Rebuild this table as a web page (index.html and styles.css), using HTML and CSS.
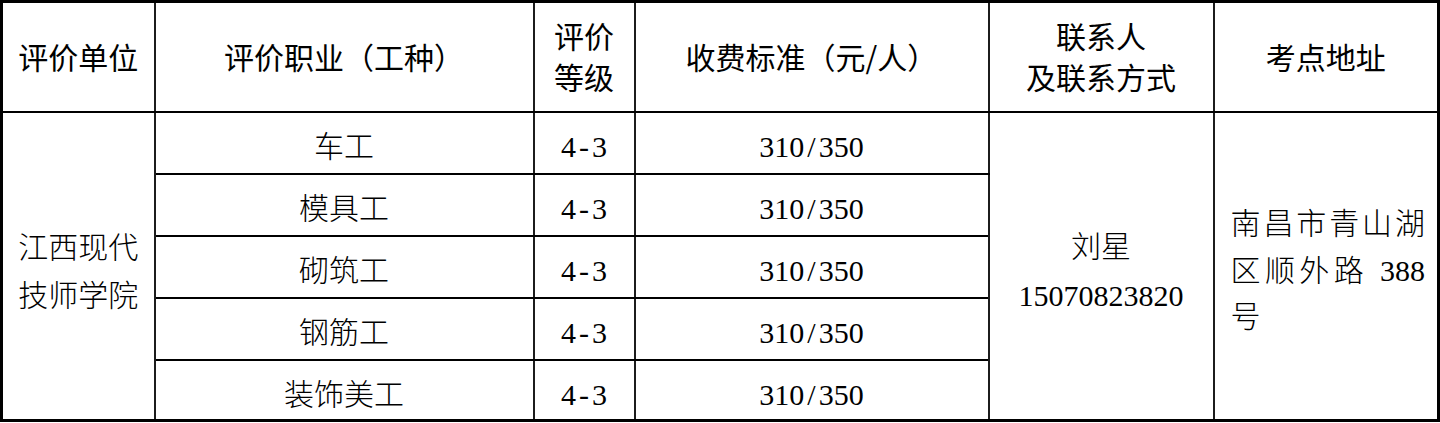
FILE: index.html
```html
<!DOCTYPE html>
<html lang="zh-CN">
<head>
<meta charset="utf-8">
<title>评价信息</title>
<link rel="stylesheet" href="styles.css">
</head>
<body>
<table class="grid">
  <colgroup>
    <col class="c1"><col class="c2"><col class="c3"><col class="c4"><col class="c5"><col class="c6">
  </colgroup>
  <thead>
    <tr class="head">
      <th>评价单位</th>
      <th>评价职业（工种）</th>
      <th class="two">评价<br>等级</th>
      <th>收费标准（元/人）</th>
      <th class="two">联系人<br>及联系方式</th>
      <th>考点地址</th>
    </tr>
  </thead>
  <tbody>
    <tr>
      <td rowspan="5" class="unit">江西现代<br>技师学院</td>
      <td class="cell">车工</td>
      <td class="cell">4<span class="sep">-</span>3</td>
      <td class="cell">310<span class="sep">/</span>350</td>
      <td rowspan="5" class="contact">刘星<br>15070823820</td>
      <td rowspan="5" class="addr">
        <div class="line just">南昌市青山湖</div>
        <div class="line just">区顺外路 388</div>
        <div class="line">号</div>
      </td>
    </tr>
    <tr><td class="cell">模具工</td><td class="cell">4<span class="sep">-</span>3</td><td class="cell">310<span class="sep">/</span>350</td></tr>
    <tr><td class="cell">砌筑工</td><td class="cell">4<span class="sep">-</span>3</td><td class="cell">310<span class="sep">/</span>350</td></tr>
    <tr><td class="cell">钢筋工</td><td class="cell">4<span class="sep">-</span>3</td><td class="cell">310<span class="sep">/</span>350</td></tr>
    <tr class="last"><td class="cell">装饰美工</td><td class="cell">4<span class="sep">-</span>3</td><td class="cell">310<span class="sep">/</span>350</td></tr>
  </tbody>
</table>
</body>
</html>
```

FILE: styles.css
```css
html, body {
  margin: 0;
  padding: 0;
  background: #fff;
}

.grid {
  width: 1437px;
  border-collapse: collapse;
  table-layout: fixed;
  border: 3px solid #000;
  color: #000;
}

.c1 { width: 153px; }
.c2 { width: 379px; }
.c3 { width: 101px; }
.c4 { width: 354px; }
.c5 { width: 225px; }
.c6 { width: 225px; }

.grid th,
.grid td {
  border-left: 2px solid #1c1c1c;
  border-right: 2px solid #1c1c1c;
  border-top: 2px solid #000;
  border-bottom: 2px solid #000;
  padding: 0;
  text-align: center;
  vertical-align: middle;
}

.head th {
  height: 106px;
  font-family: "Noto Sans CJK SC", "Noto Sans", sans-serif;
  font-weight: 400;
  font-size: 30px;
  line-height: 41px;
  padding-bottom: 2px;
}

tbody td {
  font-family: "Liberation Serif", "Noto Sans CJK SC", serif;
  font-weight: 300;
  font-size: 30px;
}

tbody td.cell {
  height: 62px;
  box-sizing: border-box;
  vertical-align: top;
  line-height: 40px;
  padding-top: 14px;
}

tbody tr.last td.cell {
  height: 60px;
}

.sep {
  padding: 0 3px;
}

tbody td.unit {
  line-height: 48px;
  padding-top: 12px;
}

tbody td.contact {
  line-height: 49px;
  padding-top: 10px;
}

tbody td.addr {
  text-align: left;
  padding: 10px 12px 0 16px;
  line-height: 46.5px;
}

.addr .line {
  white-space: nowrap;
}

.addr .just {
  text-align: justify;
  text-align-last: justify;
}
```
